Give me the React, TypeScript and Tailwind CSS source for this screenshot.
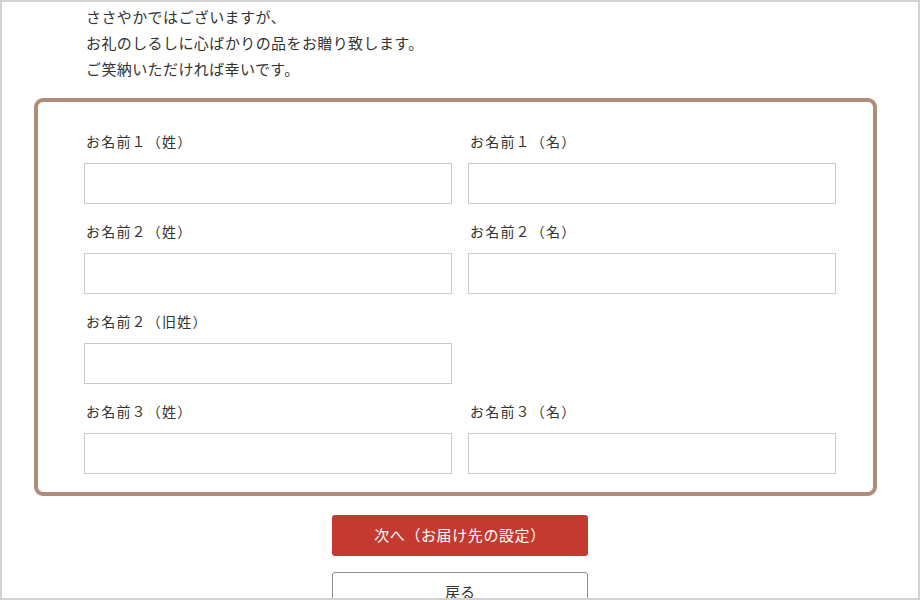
const rows: [string, string | null][] = [
  ["お名前１（姓）", "お名前１（名）"],
  ["お名前２（姓）", "お名前２（名）"],
  ["お名前２（旧姓）", null],
  ["お名前３（姓）", "お名前３（名）"],
];

function Field({ label }: { label: string }) {
  return (
    <div className="flex flex-col">
      <label className="h-5 pl-[2px] text-[14px] leading-5 tracking-[1.2px] text-[#333]">{label}</label>
      <input
        type="text"
        className="mt-[12px] h-[41px] w-[368px] border border-[#cbcbcb] bg-white px-2 outline-none"
      />
    </div>
  );
}

export default function App() {
  return (
    <div
      className="h-[600px] w-[920px] overflow-hidden border-2 border-[#d2d2d2] bg-white"
      style={{ fontFamily: '"Noto Sans CJK JP", "Noto Sans", sans-serif' }}
    >
      <div className="pl-[84px] pt-[2px] text-[15px] leading-[26px] tracking-[0.4px] text-[#333]">
        <p>ささやかではございますが、</p>
        <p>お礼のしるしに心ばかりの品をお贈り致します。</p>
        <p>ご笑納いただければ幸いです。</p>
      </div>

      <div className="ml-[32px] mt-[16px] w-[843px] rounded-[9px] border-4 border-[#b08c7b] pb-[18px] pl-[46px] pt-[29px]">
        <div className="flex flex-col gap-[17px]">
          {rows.map(([a, b]) => (
            <div key={a} className="flex gap-4">
              <Field label={a} />
              {b && <Field label={b} />}
            </div>
          ))}
        </div>
      </div>

      <div className="mt-[19px] flex flex-col items-center gap-4">
        <button className="h-[41px] w-[256px] rounded-[3px] bg-[#c43a31] text-[15px] tracking-[0.6px] text-white">
          次へ（お届け先の設定）
        </button>
        <button className="h-[41px] w-[256px] rounded-[3px] border border-[#8e8e8e] bg-white text-[15px] text-[#333]">
          戻る
        </button>
      </div>
    </div>
  );
}
